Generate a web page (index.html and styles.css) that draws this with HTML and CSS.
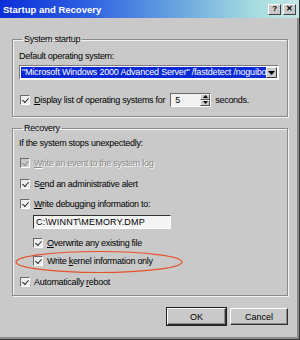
FILE: index.html
```html
<!DOCTYPE html>
<html lang="en">
<head>
  <meta charset="UTF-8" />
  <title>Startup and Recovery</title>
  <link rel="stylesheet" href="styles.css">
</head>
<body>
  <div class="window">
    <div class="titlebar">
      <span class="title">Startup and Recovery</span>
      <div class="caption-btns">
        <span class="cbtn">?</span>
        <span class="cbtn">&#x2715;</span>
      </div>
    </div>

    <div class="content">
      <!-- System startup -->
      <fieldset class="group">
        <legend>System startup</legend>
        <div class="label">Default operating system:</div>
        <div class="combo">
          <span class="combo-value"><span class="sel">"Microsoft Windows 2000 Advanced Server" /fastdetect /noguibo</span></span>
          <span class="combo-arrow">
            <svg width="7" height="4" viewBox="0 0 7 4"><path d="M0 0h7L3.5 4z" fill="#000"/></svg>
          </span>
        </div>
        <div class="row row-spaced">
          <span class="box checked"></span>
          <span><u>D</u>isplay list of operating systems for</span>
          <div class="spin">
            <span class="spin-value">5</span>
            <span class="spin-btns">
              <span class="spin-btn"><svg width="5" height="3" viewBox="0 0 5 3"><path d="M2.5 0L5 3H0z" fill="#000"/></svg></span>
              <span class="spin-btn"><svg width="5" height="3" viewBox="0 0 5 3"><path d="M0 0h5L2.5 3z" fill="#000"/></svg></span>
            </span>
          </div>
          <span>seconds.</span>
        </div>
      </fieldset>

      <!-- Recovery -->
      <fieldset class="group recovery">
        <legend>Recovery</legend>
        <div class="label">If the system stops unexpectedly:</div>
        <div class="row disabled">
          <span class="box checked"></span>
          <span><u>W</u>rite an event to the system log</span>
        </div>
        <div class="row">
          <span class="box checked"></span>
          <span>S<u>e</u>nd an administrative alert</span>
        </div>
        <div class="row">
          <span class="box checked"></span>
          <span><u>W</u>rite debugging information to:</span>
        </div>
        <div class="textbox indent">C:\WINNT\MEMORY.DMP</div>
        <div class="row indent">
          <span class="box checked"></span>
          <span><u>O</u>verwrite any existing file</span>
        </div>
        <div class="row indent tight">
          <span class="box checked"></span>
          <span>Write <u>k</u>ernel information only</span>
        </div>
        <div class="row">
          <span class="box checked"></span>
          <span>Automatically <u>r</u>eboot</span>
        </div>
      </fieldset>

      <div class="buttons">
        <button class="btn btn-default">OK</button>
        <button class="btn">Cancel</button>
      </div>
    </div>

    <!-- hand-drawn highlight -->
    <svg class="mark" width="170" height="24" viewBox="0 0 170 24">
      <ellipse cx="85" cy="12" rx="83" ry="10.5" fill="none" stroke="#e8502a" stroke-width="1.2"/>
    </svg>
  </div>
</body>
</html>
```

FILE: styles.css
```css
* {
  box-sizing: border-box;
}
body {
  margin: 0;
  background: #c9c9c9;
  font-family: "Liberation Sans", Arial, sans-serif;
  font-size: 9px;
  letter-spacing: -0.28px;
  color: #000;
}
.window {
  position: relative;
  width: 300px;
  height: 340px;
  background: #c9c9c9;
  border-right: 1px solid #303030;
  border-bottom: 1px solid #303030;
  box-shadow: inset -2px -2px 0 #8a8a8a;
  display: flex;
  flex-direction: column;
}

/* title bar */
.titlebar {
  height: 18px;
  display: flex;
  align-items: center;
  justify-content: space-between;
  padding: 0 3px 0 3px;
  background: linear-gradient(to right, #0a2ed8 0%, #2f62e2 30%, #6aa6e0 60%, #a6dce0 85%, #c4e8e4 100%);
}
.title {
  color: #fff;
  font-weight: bold;
  font-size: 9.5px;
  letter-spacing: 0;
}
.caption-btns {
  display: flex;
  gap: 2px;
}
.cbtn {
  width: 13px;
  height: 11px;
  background: #c9c9c9;
  border: 1px solid;
  border-color: #fff #404040 #404040 #fff;
  display: flex;
  align-items: center;
  justify-content: center;
  font-size: 8px;
  font-weight: bold;
  line-height: 1;
}

/* body */
.content {
  padding: 16px 11px 0 12px;
  display: flex;
  flex-direction: column;
}
.group {
  margin: 0;
  min-width: 0;
  padding: 0 8px 10px 6px;
  border: 1px solid #8a8a8a;
  box-shadow: 1px 1px 0 #f4f4f4, inset 1px 1px 0 #f4f4f4;
}
.group legend {
  padding: 0 2px;
  margin-left: 3px;
  line-height: 11px;
}
.recovery {
  margin-top: 6px;
  padding-bottom: 7px;
}
.label {
  margin-top: 6px;
  line-height: 11px;
}
.recovery .label {
  margin-top: 4px;
}

/* combo box */
.combo {
  margin-top: 3px;
  height: 15px;
  display: flex;
  background: #fff;
  border: 1px solid;
  border-color: #7a7a7a #fff #fff #7a7a7a;
  padding: 1px;
}
.combo-value {
  flex: 1;
  min-width: 0;
  white-space: nowrap;
  line-height: 11px;
}
.sel {
  display: block;
  background: #0a2ad8;
  color: #fff;
  padding-left: 1px;
  letter-spacing: -0.2px;
}
.combo-arrow {
  width: 11px;
  flex: none;
  background: #c9c9c9;
  border: 1px solid;
  border-color: #f4f4f4 #404040 #404040 #f4f4f4;
  display: flex;
  align-items: center;
  justify-content: center;
}

/* check rows */
.row {
  margin-top: 7.5px;
  height: 13px;
  display: flex;
  align-items: center;
  gap: 4px;
  white-space: nowrap;
}
.row-spaced {
  margin-top: 13px;
  padding-left: 1px;
}
.row.tight {
  margin-top: 5.5px;
}
.indent {
  margin-left: 14px;
}
.recovery > .row:not(.indent) {
  padding-left: 1px;
}
.box {
  width: 10px;
  height: 10px;
  background: #eeeeee;
  border: 1px solid;
  border-color: #6a6a6a #fff #fff #6a6a6a;
  flex: none;
  position: relative;
}
.box.checked::after {
  content: "";
  position: absolute;
  left: 1px;
  top: 0;
  width: 5px;
  height: 3px;
  border-left: 1.5px solid #222;
  border-bottom: 1.5px solid #222;
  transform: translate(0.5px, 1.5px) rotate(-48deg);
}
.disabled {
  color: #8c8c8c;
  text-shadow: 1px 1px 0 #fafafa;
}
.disabled .box {
  background: #c9c9c9;
}
.disabled .box.checked::after {
  border-color: #8c8c8c;
}

/* spin box */
.spin {
  margin: 0 0 0 1px;
  display: flex;
  height: 14px;
  border: 1px solid;
  border-color: #6a6a6a #fff #fff #6a6a6a;
  background: #f2f2f2;
}
.spin-value {
  width: 29px;
  padding-left: 4px;
  line-height: 12px;
}
.spin-btns {
  width: 10px;
  display: flex;
  flex-direction: column;
}
.spin-btn {
  flex: 1;
  background: #c9c9c9;
  border: 1px solid;
  border-color: #f4f4f4 #505050 #505050 #f4f4f4;
  display: flex;
  align-items: center;
  justify-content: center;
}

/* text box */
.textbox {
  margin-top: 4px;
  width: 138px;
  height: 14px;
  background: #f4f4f4;
  border: 1px solid;
  border-color: #303030 #fff #fff #303030;
  padding-left: 2px;
  line-height: 12px;
  letter-spacing: 0.2px;
}

/* dialog buttons */
.buttons {
  margin-top: 12px;
  display: flex;
  justify-content: flex-end;
  gap: 4px;
}
.btn {
  width: 58px;
  height: 17px;
  background: #c9c9c9;
  border: 1px solid;
  border-color: #fff #303030 #303030 #fff;
  box-shadow: inset -1px -1px 0 #8a8a8a;
  font: inherit;
  padding: 0;
}
.btn-default {
  width: 59px;
  outline: 1px solid #202020;
  outline-offset: 0;
}

/* annotation */
.mark {
  position: absolute;
  left: 14px;
  top: 250px;
}
```
